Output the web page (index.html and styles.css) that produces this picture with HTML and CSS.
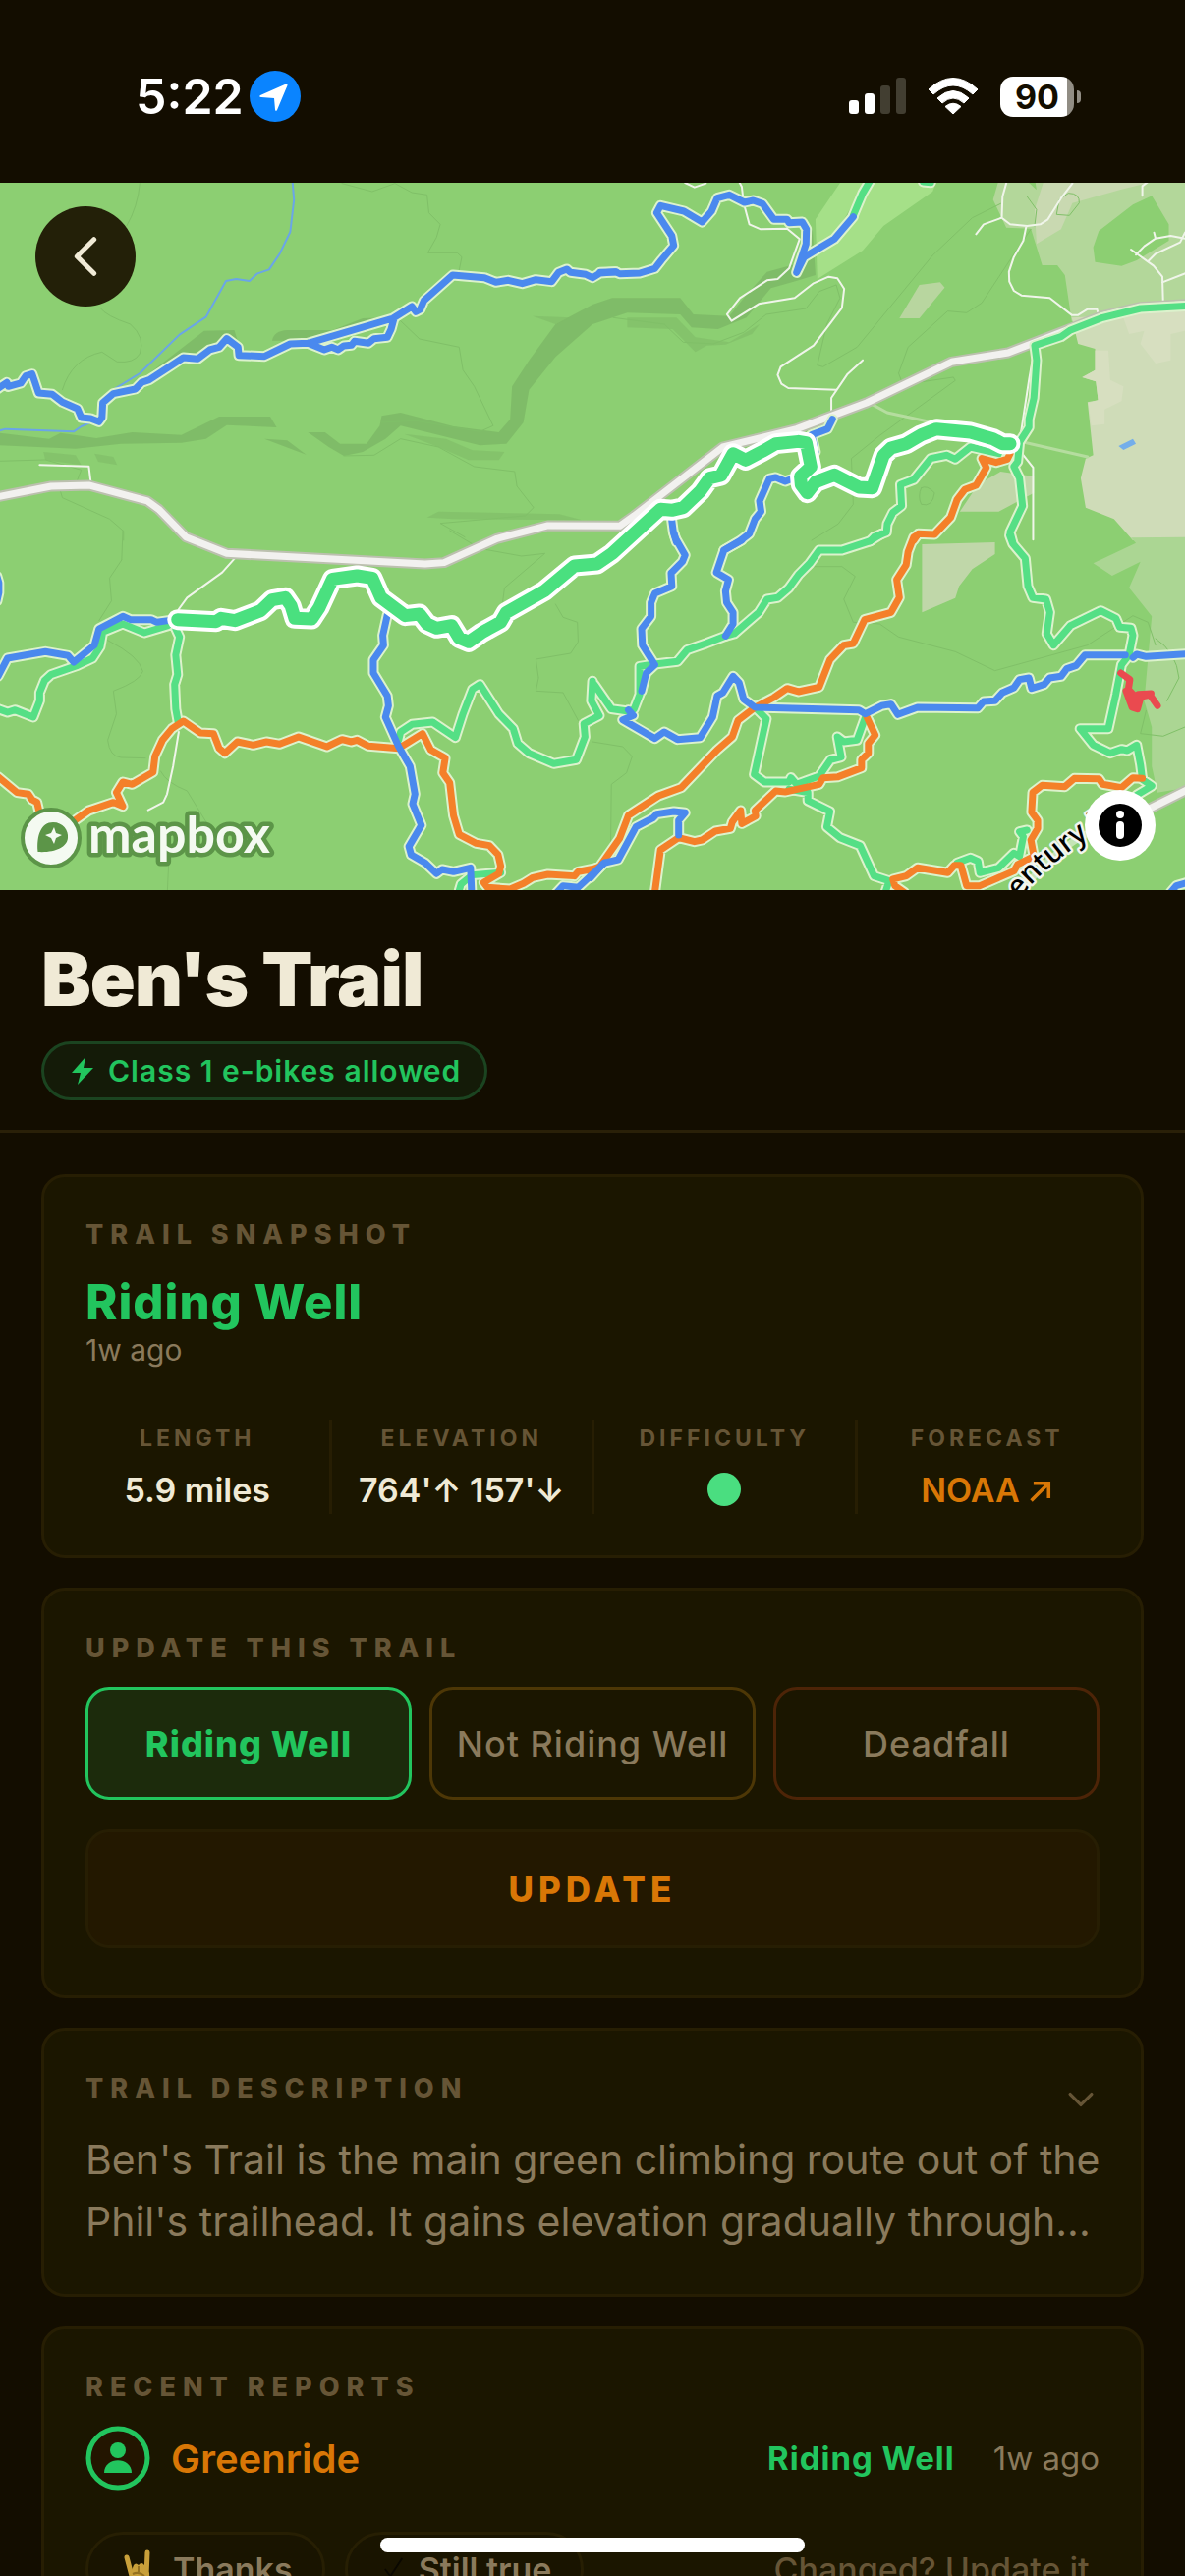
FILE: index.html
```html
<!DOCTYPE html>
<html lang="en">
<head>
    <meta charset="UTF-8">
    <meta name="viewport" content="width=device-width, initial-scale=1.0">
    <title>Ben's Trail</title>
    <link rel="stylesheet" href="styles.css">
</head>
<body>
    <div class="screen">
        <div class="status-bar">
            <div class="status-left">
                <span class="clock">5:22</span>
                <svg class="location" viewBox="0 0 52 52" aria-hidden="true">
                    <circle cx="26" cy="26" r="26" fill="#0a84ff"/>
                    <path d="M37 13.500Q39 13 38.500 15L28 40Q26.500 42 26 39.500L25 28 12 27Q9 26.500 11 25Z" fill="#fff"/>
                </svg>
            </div>
            <div class="status-right">
                <svg class="signal" viewBox="0 0 58 38" aria-hidden="true">
                    <rect x="0" y="23" width="10" height="14" rx="3" fill="#fff"/>
                    <rect x="16" y="16" width="10" height="21" rx="3" fill="#fff"/>
                    <rect x="32" y="8" width="10" height="29" rx="3" fill="#423e31"/>
                    <rect x="48" y="0" width="10" height="37" rx="3" fill="#423e31"/>
                </svg>
                <svg class="wifi" viewBox="0 0 52 38" aria-hidden="true">
                    <path d="M1 12Q26-11 51 12L46 17Q26-1 6 17Z M10 21Q26 6 42 21L37 26Q26 16 15 26Z M18 29.500Q26 23 34 29.500L26 37Z" fill="#fff" stroke="#fff" stroke-width="1" stroke-linejoin="round"/>
                </svg>
                <div class="battery"><span class="battery-level">90</span></div>
            </div>
        </div>

        <div class="map">
            <svg class="map-canvas" viewBox="0 186 1206 720" role="img" aria-label="Trail map">
                <defs>
                    <g id="roads">
                        <path transform="translate(0 180) scale(.3846 .3333)" d="M-10 978 135 945 235 942 390 990 420 1015 492 1100 600 1150 1125 1182 1175 1178 1315 1105 1450 1065 1640 1066 1678 1035 1913 825 2108 770 2293 690 2518 565 2668 537 2818 470 2918 425 3018 398 3140 389"/>
                        <path d="M1160 828 1210 803"/>
                    </g>
                    <g id="blue">
                        <path transform="translate(0 180) scale(.3846 .3333)" d="M-10 650 18 628 22 640 55 630 68 608 85 602 92 625 102 660 138 664 165 688 205 708 215 735 240 738 262 748 270 735 272 690 300 662 358 648 375 628 395 620 485 552 523 556 555 528 580 520 600 494 630 520 632 545 700 548 768 510 815 508 1040 432 1090 396 1100 412 1112 405 1122 378 1198 300 1282 308 1312 322 1345 316 1382 326 1418 314 1460 320 1478 292 1500 282 1510 292 1550 298 1568 308 1588 294 1630 290M815 508 858 528 878 520 895 528 910 516 930 514 938 502 975 508 990 494 1025 490 1035 465 1042 435"/>
                        <path transform="translate(603 180) scale(.3846 .3333)" d="M20 292 60 290 72 296 125 294 165 280 182 255 215 210 210 180 170 110 180 88 242 105 290 138 315 105 330 65 362 55 402 78 425 72 450 82 480 130 515 130 520 140 555 138 566 160 565 205 540 292 560 245 640 190 690 122M635 740 622 770 580 788 590 840M522 925 510 930 485 918 468 922 442 990 446 1022 430 1045 415 1090 390 1112 348 1140M210 1050 214 1085 222 1115"/>
                        <path transform="translate(0 540) scale(.3846 .3333)" d="M-5 445 20 390 120 370 180 382 195 402 250 350 262 300 325 262 345 272 400 272 415 280 445 275M1025 258 1013 320 1015 350 988 395 988 435 1025 505 1028 535 1020 570 1055 660 1085 720 1098 805 1092 835 1115 900 1082 965 1088 990 1125 1015 1155 1048 1170 1035 1200 1042 1245 1030 1248 1110M1470 1110 1490 1085 1530 1090 1600 1015M-8 140 -3 160 -3 190 -8 215"/>
                        <path transform="translate(603 540) scale(.3846 .3333)" d="M216 10 220 25 245 75 238 95 208 130 210 170 165 192 155 220 155 262 130 300 132 350 165 410 142 435 130 490M395 30 348 60 328 128 360 150 352 185 355 220 372 250 372 285 352 322M95 548 108 565 80 578 165 635 190 615 225 638 285 632 318 570 330 505 345 495 372 445 388 465 400 515 430 540 705 548 722 560 765 535 790 530 808 562 860 540 1020 542 1035 522 1065 520 1085 495 1115 480 1130 455 1155 450 1162 482 1195 470 1210 450 1240 445 1255 422 1280 412 1303 380 1410 380M1430 388 1440 378 1465 385 1575 377M-5 1060 30 1015 68 1005 115 905 160 878 170 866 215 858 245 862 228 885 228 930M1530 1105 1545 1085 1575 1075"/>
                    </g>
                    <g id="green">
                        <path transform="translate(603 180) scale(.3846 .3333)" d="M738 5 715 50 690 118M1575 394 1450 402 1350 430 1265 468 1240 488 1170 515 1175 560 1168 675 1155 740 1155 765 1130 810 1125 870 1115 885 1130 920 1138 1005 1105 1085 1112 1115M1075 845 1000 825 960 862 938 850 895 860 850 925 815 940 818 1005 795 1025 780 1060 778 1085 745 1100 735 1112M875 15 895 17"/>
                        <path transform="translate(0 540) scale(.3846 .3333)" d="M-5 545 20 555 40 548 88 570 105 520 105 495 118 458 135 440 205 412 245 390 265 355 272 310 325 285 382 312 445 290M465 300 475 325 465 380 470 440 462 470 465 545 472 590M1055 640 1060 615 1090 592 1145 585 1205 632 1225 560 1250 485 1270 470 1320 560 1358 605 1370 650 1400 680 1465 712 1525 700 1548 630 1545 590 1586 565 1565 520 1568 460M1215 1100 1220 1080 1250 1052 1325 1045"/>
                        <path transform="translate(603 540) scale(.3846 .3333)" d="M765 10 735 32 660 60 600 60 575 100 545 135 520 175 490 205 462 210 440 250 375 315 352 322 300 345 250 365 225 400 165 408 125 415 125 500 110 545 95 552 50 545 5 470M1104 15 1112 40 1145 85 1152 170 1165 205 1200 210 1210 250 1202 315 1220 350 1265 290 1345 245 1385 268 1395 295 1425 298 1430 320 1420 380 1400 410 1385 500 1365 605 1290 605 1325 655 1370 680 1400 668 1415 672 1440 655 1450 715 1455 760 1480 780 1440 808M430 540 460 575 428 745 455 768 520 768 525 755 540 775 600 750 630 700 658 692 648 630 665 645 700 640 722 570M520 790 570 800 570 825 628 858 620 905 655 938 708 962 745 1055 785 1070 775 1105M965 1015 1000 1000 1020 1010 1025 1045 1075 1030 1115 985 1130 995 1140 935 1130 920 1150 915"/>
                    </g>
                    <g id="orange">
                        <path transform="translate(603 180) scale(.3846 .3333)" d="M1105 845 1098 862 1068 872 1030 860 1042 888 1015 942 985 955 965 985 948 1040 905 1092 862 1090 850 1110"/>
                        <path transform="translate(0 540) scale(.3846 .3333)" d="M-5 752 45 800 75 805 85 822 98 830 105 865 150 900 195 888 235 855 300 830 325 842 308 800 325 768 350 775 405 738 410 690 430 640 455 605 485 582 530 618 565 620 580 665 595 680 628 645 670 655 705 645 740 652 790 630 865 660 905 638 930 645 945 640 975 658 1055 665 1118 620 1140 670 1178 695 1172 740 1190 770 1200 870 1215 928 1260 955 1295 962 1318 990 1325 1025 1320 1048 1280 1075 1290 1090 1350 1095 1385 1078 1410 1060 1450 1050 1520 1055 1530 1042 1575 1032"/>
                        <path transform="translate(603 540) scale(.3846 .3333)" d="M862 12 850 20 835 65 830 105 805 150 812 205 790 250 720 272 690 345 665 350 628 395 600 478 545 492 515 482 480 510 430 540 385 580 370 630 330 670 235 785 175 810 95 870 72 940 20 1025 -8 1040M722 560 748 625 730 650 730 680 712 700 712 725 650 752 610 755 600 775 510 798 485 795 430 855 432 872 395 895 392 855 370 890 365 910 325 918 290 945 270 950 228 938 180 975 165 1105M1455 757 1430 755 1400 785 1350 775 1340 758 1275 757 1250 782 1190 778 1165 800 1162 860 1178 885 1178 910 1160 945 1168 995 1125 1020 1115 1040 1025 1085 990 1085 975 1022 958 1022 940 1045 860 1030 830 1055 795 1065 800 1085 825 1105"/>
                    </g>
                    <g id="bens-trail">
                        <path transform="translate(0 540) scale(.3846 .3333)" d="M470 272 572 278 585 268 622 275 690 245 720 212 755 205 770 230 780 268 825 270 845 235 880 148 945 138 985 145 1008 205 1072 260 1110 255 1130 285 1155 298 1195 290 1215 328 1240 340 1275 312 1290 302 1325 280 1340 250 1440 185 1520 108 1580 102 1620 70 1748 -65 1778 -62 1808 -70 1853 -120 1878 -160 1908 -168 1940 -235 1973 -215 2018 -242 2053 -265 2113 -272 2133 -268 2146 -195 2118 -165 2120 -140 2136 -115 2158 -148 2208 -170 2273 -132 2308 -130 2338 -230 2358 -252 2398 -265 2438 -292 2478 -310 2568 -300 2628 -280 2653 -265 2673 -265"/>
                    </g>
                    <path id="street-name" d="M1038 915Q1062 881 1134 835"/>
                </defs>

                <rect y="186" width="1206" height="720" fill="#8ccf72"/>

                <!-- land cover -->
                <g transform="translate(603 180) scale(.3846 .3333)">
                    <path d="M1075 10 1060 70 1095 155 1160 158 1190 270 1230 270 1250 300 1268 440 1568 440 1568 10Z" fill="#b3d79a"/>
                    <path d="M1195 10 1170 100 1175 205 1240 160 1270 80 1400 38 1500 10Z" fill="#c9d9b1"/>
                    <path d="M1268 430 1350 425 1450 398 1568 390 1568 1110 1430 1110 1380 1045 1305 1010 1292 920 1305 860 1325 850 1310 688 1338 682 1332 625 1295 612 1330 590 1330 525 1285 510Z" fill="#cfdcb8"/>
                    <path d="M1330 530 1365 530 1370 620 1405 640 1400 685 1355 710 1355 755 1320 760 1312 690 1338 682 1332 625 1297 612 1330 590ZM1400 415 1568 405 1568 470 1530 480 1530 560 1490 570 1450 510 1460 470 1420 480Z" fill="#d7dfc0"/>
                    <path d="M1480 58 1430 85 1340 165 1325 215 1330 260 1400 272 1440 255 1525 195 1525 145ZM1155 18 1172 18 1175 40Z" fill="#8ccf72"/>
                    <path d="M660 10 912 10 900 45 770 150 715 225 595 312 590 130Z" fill="#a5e088"/>
                    <path d="M865 330 920 322 932 338 865 432 812 432Z" fill="#b8d69f"/>
                    <path d="M1080 900 1168 915 1168 965 1075 1022 972 1022 1020 940Z" fill="#c0d7a9"/>
                    <path d="M1392 822 1430 800 1438 815 1405 834Z" fill="#74aeea"/>
                </g>
                <g transform="translate(603 540) scale(.3846 .3333)">
                    <path d="M872 42 1065 36 1065 72 1005 118 970 170 960 206 872 250Z" fill="#c0d7a9"/>
                    <path d="M1425 22 1438 38 1325 100 1375 138 1450 95 1420 175 1480 262 1460 520 1480 600 1480 720 1495 800 1575 785 1575 20Z" fill="#abd693"/>
                </g>

                <!-- terrain shading -->
                <g class="terrain" transform="translate(0 180) scale(.3846 .3333)">
                    <path d="M0 782 130 800 160 782 255 798 350 780 480 788 580 732 715 732 732 765 600 758 545 800 480 812 320 815 200 830 0 820Z"/>
                    <path d="M395 600 540 470 620 468 628 498 560 510 480 560ZM720 500Q725 470 760 468L880 468 960 432 1020 430 1000 450 830 500ZM700 800 760 805 810 848ZM815 780 860 780 900 815 970 815 1005 760 1010 730 1060 720 1200 762 1320 780 1350 740 1355 640 1400 560 1470 450 1568 390 1620 370 1800 370 1835 420 1930 425 1975 360 2030 290 2110 265 2150 160 2158 300 2100 320 2040 340 1975 430 1900 465 1830 460 1800 420 1660 415 1568 450 1470 550 1400 650 1385 750 1340 815 1270 820 1150 785 1060 760 1020 800 960 840 910 852 870 825Z"/>
                    <path d="M1660 430 1790 430 1840 490 1930 505 2010 450 1990 480 1920 512 1870 515 1840 535 1780 465 1660 460ZM1070 785 1180 800 1250 835 1335 840 1320 865 1240 865 1160 825ZM1130 1040 1160 1022 1480 1030 1540 1048 1200 1045ZM1410 425 1510 430 1470 450ZM115 840 200 850 215 880 120 865ZM250 845 300 855 310 880 260 870ZM2220 155 2290 20 2310 20 2270 110 2240 155Z" opacity=".6"/>
                </g>
                <g class="contour">
                    <path transform="translate(0 180) scale(.3846 .3333)" d="M370 20Q365 90 335 150M265 400Q280 425 345 450 385 490 370 540 355 570 310 565L270 535Q190 555 165 650M905 20 985 45 1045 20 1090 48 1130 55 1135 110 1165 145 1155 185 1132 232 1210 232 1222 245 1215 285M1060 440 1110 495 1215 520 1225 590 1255 640 1305 760 1270 778 1100 745 1010 750M910 852 990 850 1060 800 1160 825 1255 885 1362 900 1368 945 1412 1010 1390 1035 1165 1058 1230 1100M0 868 120 864 215 895 205 925M160 960 165 980 290 1045 327 1082 327 1110"/>
                    <path transform="translate(603 180) scale(.3846 .3333)" d="M55 430 190 450 240 505 320 510 400 475 460 420 565 402 600 350 645 330 655 370 620 450 595 575 610 580 700 520 900 240 1005 125 1080 82M1160 160 1110 245 1030 385 990 415 940 410 835 520 810 600 820 630 860 628 955 612 960 622 760 790 685 860 690 1000 650 1060 580 1110M870 950Q885 940 905 965 900 1010 870 1000 860 975 870 950M1150 60 1175 100 1170 150M1260 50Q1290 50 1288 80L1262 118 1228 115 1235 70Z"/>
                    <path transform="translate(0 540) scale(.3846 .3333)" d="M325 0 322 90 290 145 295 215 262 275M285 335Q370 385 378 430 370 460 300 490L308 560 285 640Q290 690 320 693L385 695M425 735Q440 770 495 795L548 895M447 1000 443 1100M1190 0 1270 55 1380 78 1442 70 1335 175 1330 220M1470 225 1490 265 1528 280 1530 340 1510 375 1418 393 1425 450 1418 490 1490 495 1530 580"/>
                    <path transform="translate(603 540) scale(.3846 .3333)" d="M580 110 660 110 695 140 665 210 690 280 760 285 810 325 960 370 1065 428 1310 350 1430 260 1470 280 1490 350M0 645 80 660 105 690 90 740 50 775 48 975M1568 600 1510 628 1450 620 1465 550M1490 330Q1545 370 1552 450L1520 520"/>
                </g>

                <g class="river">
                    <path transform="translate(0 180) scale(.3846 .3333)" d="M774 15 778 70 768 168 740 235 712 283 680 296 660 318 625 312 598 318 545 428 475 482 370 600 300 650M-5 776 15 770 195 778 215 762 250 745"/>
                </g>

                <!-- streets -->
                <g class="lane">
                    <path transform="translate(0 180) scale(.3846 .3333)" d="M105 880 235 884 241 940"/>
                    <path transform="translate(0 540) scale(.3846 .3333)" d="M625 80 588 128 495 205 473 240M473 615 458 720 442 805 432 830 392 854"/>
                    <path transform="translate(603 180) scale(.3846 .3333)" d="M388 15 395 30 400 80 415 145 445 160 515 158 548 190 520 280 490 312 462 316 390 370 356 420 368 440 440 388 535 370 585 325 625 305 648 310 666 342 660 400 585 515 498 580 490 605 500 632 518 645 645 650M715 560 675 602 632 675 632 735M245 18 270 32 300 20M1096 15 1085 60 1083 125 1105 145 1150 150 1185 145 1205 130 1240 65 1270 20M1083 125 1035 145 1015 175M1148 150 1140 195 1115 245 1102 290 1103 320 1115 348 1135 362 1210 370 1268 422 1285 422 1310 404 1335 404 1338 418M1510 380 1508 305 1485 272 1425 222M1508 322 1575 292M1438 238 1460 212 1490 188 1530 180 1568 188M1470 258 1490 235 1555 200 1568 170M1486 170 1490 188M1130 835 1166 888 1166 1108M1130 810 1155 620 1170 520M1455 58 1455 28 1470 15"/>
                </g>
                <path class="path-faint" transform="translate(603 180) scale(.3846 .3333)" d="M740 695 780 720 900 750 1120 805 1310 855"/>
                <path class="path-faint wide" d="M1035 915Q1070 860 1130 838"/>

                <use href="#roads" class="road-casing"/>
                <use href="#roads" class="road"/>

                <!-- trails -->
                <g class="casing">
                    <use href="#green"/>
                    <use href="#orange"/>
                    <use href="#blue"/>
                </g>
                <use href="#green" class="trail easy"/>
                <use href="#orange" class="trail hard"/>
                <use href="#blue" class="trail medium"/>
                <path class="trail expert" transform="translate(603 540) scale(.3846 .3333)" d="M1398 435 1422 455 1418 485 1438 510 1475 502 1495 535M1412 490 1428 540 1442 545 1450 512 1425 500 1440 535M1445 500 1478 498"/>
                <use href="#bens-trail" class="selected-casing"/>
                <use href="#bens-trail" class="selected"/>

                <text class="street-label"><textPath href="#street-name">entury Dr</textPath></text>

                <g class="map-logo">
                    <circle cx="52" cy="853" r="29" fill="#f4faf1" stroke="#5c9548" stroke-width="4"/>
                    <path d="M38.500 867C37 850 42 837 54 837 64 837 70 845 69 853 68 863 55 868 38.500 867Z" fill="#5c9548"/>
                    <path d="M55 842 57 848 63 850 57 853 55 859 52 853 46 850 52 848Z" fill="#f4faf1"/>
                    <text x="90" y="868">mapbox</text>
                </g>
            </svg>
            <button class="back-button" type="button" aria-label="Back">
                <svg viewBox="0 0 24 24" aria-hidden="true"><path d="m16 4-8 8 8 8"/></svg>
            </button>
            <button class="info-button" type="button" aria-label="Map information">
                <svg viewBox="0 0 44 44" aria-hidden="true">
                    <circle cx="22" cy="22" r="22" fill="#000"/>
                    <circle cx="22" cy="11" r="4" fill="#fff"/>
                    <rect x="18" y="18" width="8" height="18" rx="4" fill="#fff"/>
                </svg>
            </button>
        </div>

        <header class="trail-header">
            <h1>Ben's Trail</h1>
            <div class="ebike-pill">
                <svg viewBox="0 0 24 28" aria-hidden="true"><path d="M15 0 1 16H10L7 28 23 11H13Z"/></svg>
                <span>Class 1 e-bikes allowed</span>
            </div>
        </header>

        <main class="content">
            <section class="card">
                <h2>Trail snapshot</h2>
                <p class="condition">Riding Well</p>
                <p class="condition-age">1w ago</p>
                <dl class="stats">
                    <div class="stat"><dt>Length</dt><dd>5.9 miles</dd></div>
                    <div class="stat"><dt>Elevation</dt><dd>764'↑ 157'↓</dd></div>
                    <div class="stat"><dt>Difficulty</dt><dd><span class="difficulty-dot"></span></dd></div>
                    <div class="stat"><dt>Forecast</dt><dd><a href="#forecast">NOAA <svg viewBox="0 0 22 22" aria-hidden="true"><path d="M3 19 18 4M5 4H18V17"/></svg></a></dd></div>
                </dl>
            </section>

            <section class="card card-update">
                <h2>Update this trail</h2>
                <div class="choices">
                    <button class="choice choice-good" type="button">Riding Well</button>
                    <button class="choice choice-poor" type="button">Not Riding Well</button>
                    <button class="choice choice-deadfall" type="button">Deadfall</button>
                </div>
                <button class="update-button" type="button">UPDATE</button>
            </section>

            <section class="card">
                <div class="card-head">
                    <h2>Trail description</h2>
                    <button class="expand-button" type="button" aria-label="Expand description">
                        <svg viewBox="0 0 24 14" aria-hidden="true"><path d="m2 2 10 10L22 2"/></svg>
                    </button>
                </div>
                <p class="description">Ben's Trail is the main green climbing route out of the Phil's trailhead. It gains elevation gradually through...</p>
            </section>

            <section class="card">
                <h2>Recent reports</h2>
                <div class="report">
                    <svg class="avatar" viewBox="0 0 66 66" aria-hidden="true">
                        <circle cx="33" cy="33" r="30" fill="#231500" stroke="#22c55e" stroke-width="5"/>
                        <circle cx="33" cy="25" r="8" fill="#22c55e"/>
                        <path d="M19 48C19 31 47 31 47 48Z" fill="#22c55e"/>
                    </svg>
                    <a class="report-user" href="#greenride">Greenride</a>
                    <span class="report-status">Riding Well</span>
                    <span class="report-age">1w ago</span>
                </div>
                <div class="report-actions">
                    <button class="chip" type="button">
                        <svg class="horns" viewBox="0 0 30 40" aria-hidden="true">
                            <path d="M3 8 8 27M24 3 23 27" fill="none" stroke="#c9a03a" stroke-width="5" stroke-linecap="round"/>
                            <path d="M7 24 10 16Q12 13 15 16 18 12 21 16L26 24Q27 34 21 39H11Q5 34 7 24Z" fill="#c9a03a"/>
                            <path d="M15 17V23M9 25Q15 22 21 27" fill="none" stroke="#94701f" stroke-width="2"/>
                        </svg>
                        Thanks
                    </button>
                    <button class="chip chip-confirm" type="button">
                        <svg class="tick" viewBox="0 0 24 30" aria-hidden="true"><path d="m2 15 6 8L21 3" fill="none" stroke="#0a0800" stroke-width="2"/></svg>
                        Still true
                    </button>
                    <a class="report-link" href="#update">Changed? Update it.</a>
                </div>
            </section>
        </main>
        <div class="home-indicator"></div>
    </div>
</body>
</html>
```
FILE: styles.css
```css
* {
    box-sizing: border-box;
}
body {
    margin: 0;
    background: #130d00;
    color: #f0ead6;
    font-family: Inter, "Liberation Sans", sans-serif;
}
h1, h2, p, dl, dd {
    margin: 0;
}
button {
    font-family: inherit;
    cursor: pointer;
}
a {
    color: inherit;
    text-decoration: none;
}
.screen {
    position: relative;
    height: 100vh;
    overflow: hidden;
}

/* status bar */
.status-bar {
    display: flex;
    justify-content: space-between;
    align-items: center;
    height: 186px;
    padding: 10px 113px 0 138px;
    color: #fff;
}
.status-left {
    display: flex;
    align-items: center;
    gap: 6px;
}
.clock {
    font-size: 50px;
    font-weight: 600;
    line-height: 60px;
}
.location {
    width: 52px;
    height: 52px;
}
.status-right {
    display: flex;
    align-items: center;
    gap: 22px;
}
.signal {
    width: 58px;
    height: 38px;
}
.wifi {
    width: 52px;
    height: 38px;
}
.battery {
    position: relative;
    width: 75px;
    height: 41px;
    border-radius: 13px;
    background: linear-gradient(to right, #fff 68px, #918d84 68px);
    text-align: center;
}
.battery::after {
    content: "";
    position: absolute;
    top: 14px;
    right: -7px;
    width: 4px;
    height: 13px;
    border-radius: 0 4px 4px 0;
    background: #918d84;
}
.battery-level {
    color: #130d00;
    font-size: 34px;
    font-weight: 700;
    line-height: 41px;
}

/* map */
.map {
    position: relative;
}
.map-canvas {
    display: block;
    width: 100%;
}
.map-canvas path {
    vector-effect: non-scaling-stroke;
}
.contour, .river, .lane, .path-faint, .road, .road-casing,
.casing, .trail, .selected, .selected-casing {
    fill: none;
    stroke-linejoin: round;
    stroke-linecap: round;
}
.terrain {
    fill: #7db866;
    opacity: 0.8;
}
.contour {
    stroke: #80c068;
    stroke-width: 1px;
}
.river {
    stroke: #6aa5e8;
    stroke-width: 2px;
}
.lane {
    stroke: #f0f5ea;
    stroke-width: 2px;
}
.path-faint {
    stroke: #b5dd9f;
    stroke-width: 3px;
}
.path-faint.wide {
    stroke: #c5e5b5;
    stroke-width: 7px;
}
.road-casing {
    stroke: #bcc0af;
    stroke-width: 11px;
}
.road {
    stroke: #f2f1ef;
    stroke-width: 7px;
}
.casing {
    stroke: #dcf2cc;
    stroke-width: 11px;
}
.trail {
    stroke-width: 7px;
}
.easy {
    stroke: #55df85;
}
.medium {
    stroke: #4a89ee;
}
.hard {
    stroke: #f48029;
}
.expert {
    stroke: #ea4a4f;
}
.selected-casing {
    stroke: #fff;
    stroke-width: 21px;
}
.selected {
    stroke: #4ae07f;
    stroke-width: 13px;
}
.street-label {
    font-family: "Noto Sans", sans-serif;
    font-size: 30px;
    font-weight: 500;
    fill: #000;
    stroke: #f2f5ef;
    stroke-width: 5px;
    stroke-linejoin: round;
    paint-order: stroke;
}
.map-logo text {
    font-family: Lato, sans-serif;
    font-size: 52px;
    font-weight: 700;
    fill: #f4faf1;
    stroke: #5c9548;
    stroke-width: 9px;
    stroke-linejoin: round;
    paint-order: stroke;
}
.back-button, .info-button {
    position: absolute;
    display: flex;
    align-items: center;
    justify-content: center;
    border: none;
    border-radius: 50%;
    padding: 0;
}
.back-button {
    top: 24px;
    left: 36px;
    width: 102px;
    height: 102px;
    background: #232008;
}
.back-button svg {
    width: 52px;
    height: 52px;
    fill: none;
    stroke: #f0ead6;
    stroke-width: 5px;
    stroke-linecap: round;
    stroke-linejoin: round;
}
.back-button path {
    vector-effect: non-scaling-stroke;
}
.info-button {
    right: 30px;
    bottom: 30px;
    width: 72px;
    height: 72px;
    background: #fff;
}
.info-button svg {
    width: 44px;
    height: 44px;
}

/* trail header */
.trail-header {
    padding: 48px 42px 30px;
    border-bottom: 3px solid #2a2008;
}
h1 {
    font-size: 76px;
    font-weight: 900;
    line-height: 84px;
    letter-spacing: -1px;
}
.ebike-pill {
    display: inline-flex;
    align-items: center;
    gap: 14px;
    height: 60px;
    margin-top: 22px;
    padding: 0 24px 0 27px;
    border: 3px solid #1b4420;
    border-radius: 30px;
    background: #141b08;
    color: #22c55e;
    font-size: 30px;
    font-weight: 600;
    letter-spacing: 1px;
    vertical-align: top;
}
.ebike-pill svg {
    width: 24px;
    height: 28px;
    fill: #22c55e;
}

/* cards */
.content {
    display: flex;
    flex-direction: column;
    gap: 30px;
    padding: 42px;
}
.card {
    padding: 42px;
    border: 3px solid #271e03;
    border-radius: 24px;
    background: #1b1600;
}
.card-update {
    padding-bottom: 48px;
}
h2 {
    margin-bottom: 22px;
    color: #665536;
    font-size: 27px;
    font-weight: 800;
    line-height: 34px;
    letter-spacing: 7px;
    text-transform: uppercase;
}
.condition {
    color: #22c55e;
    font-size: 49px;
    font-weight: 800;
    line-height: 60px;
    letter-spacing: 1px;
}
.condition-age {
    color: #8a7a5c;
    font-size: 30px;
    line-height: 36px;
}
.stats {
    display: grid;
    grid-template-columns: repeat(4, 1fr);
    margin: 53px -18px 0 -20px;
}
.stat {
    padding: 5px 0 3px;
    text-align: center;
}
.stat + .stat {
    border-left: 3px solid #271e03;
}
.stat dt {
    margin-bottom: 18px;
    color: #665536;
    font-size: 23px;
    font-weight: 700;
    line-height: 28px;
    letter-spacing: 4px;
    text-transform: uppercase;
}
.stat dd {
    height: 42px;
    font-size: 34px;
    font-weight: 600;
    line-height: 42px;
}
.stat a {
    color: #d97706;
}
.stat a svg {
    width: 26px;
    height: 26px;
    fill: none;
    stroke: #d97706;
    stroke-width: 3;
    vertical-align: -2px;
}
.difficulty-dot {
    display: inline-block;
    width: 34px;
    height: 34px;
    margin-top: 3px;
    border-radius: 50%;
    background: #4ade80;
}
.choices {
    display: grid;
    grid-template-columns: repeat(3, 1fr);
    gap: 18px;
}
.choice {
    height: 115px;
    padding: 0;
    border: 3px solid;
    border-radius: 24px;
    background: transparent;
    color: #8a7a5c;
    font-size: 36px;
    font-weight: 500;
    letter-spacing: 1px;
}
.choice-good {
    border-color: #22c55e;
    background: #1c2b0c;
    color: #22c55e;
    font-weight: 800;
}
.choice-poor {
    border-color: #4d3706;
}
.choice-deadfall {
    border-color: #4d2407;
}
.update-button {
    display: block;
    width: 100%;
    height: 121px;
    margin-top: 30px;
    border: 3px solid #271e03;
    border-radius: 24px;
    background: #231800;
    color: #d97706;
    font-size: 35px;
    font-weight: 800;
    letter-spacing: 5px;
}
.card-head {
    display: flex;
    justify-content: space-between;
    align-items: flex-start;
    height: 58px;
}
.expand-button {
    display: flex;
    align-items: center;
    height: 56px;
    padding: 0 6px;
    border: none;
    background: none;
}
.expand-button svg {
    width: 26px;
    height: 16px;
    fill: none;
    stroke: #665536;
    stroke-width: 3;
    stroke-linecap: round;
    stroke-linejoin: round;
}
.description {
    margin-right: -12px;
    color: #8a7a5c;
    font-size: 41px;
    line-height: 63px;
}
.report {
    display: flex;
    align-items: center;
    font-size: 33px;
}
.avatar {
    width: 66px;
    height: 66px;
}
.report-user {
    margin: 0 auto 0 21px;
    color: #d97706;
    font-size: 40px;
    font-weight: 600;
}
.report-status {
    color: #22c55e;
    font-weight: 700;
    letter-spacing: 1px;
}
.report-age {
    margin-left: 39px;
    color: #8a7a5c;
}
.report-actions {
    display: flex;
    align-items: center;
    gap: 20px;
    margin-top: 42px;
}
.chip {
    display: flex;
    align-items: center;
    gap: 20px;
    height: 76px;
    padding: 0 30px 0 36px;
    border: 3px solid #271f03;
    border-radius: 38px;
    background: #191400;
    color: #8a7a5c;
    font-size: 34px;
    font-weight: 600;
}
.chip-confirm {
    gap: 14px;
}
.horns {
    width: 30px;
    height: 40px;
}
.tick {
    width: 22px;
    height: 30px;
}
.report-link {
    margin-left: auto;
    color: #665536;
    font-size: 34px;
    font-weight: 500;
}
.home-indicator {
    position: absolute;
    bottom: 24px;
    left: 50%;
    width: 432px;
    height: 15px;
    border-radius: 8px;
    background: #fff;
    transform: translateX(-50%);
}
```
